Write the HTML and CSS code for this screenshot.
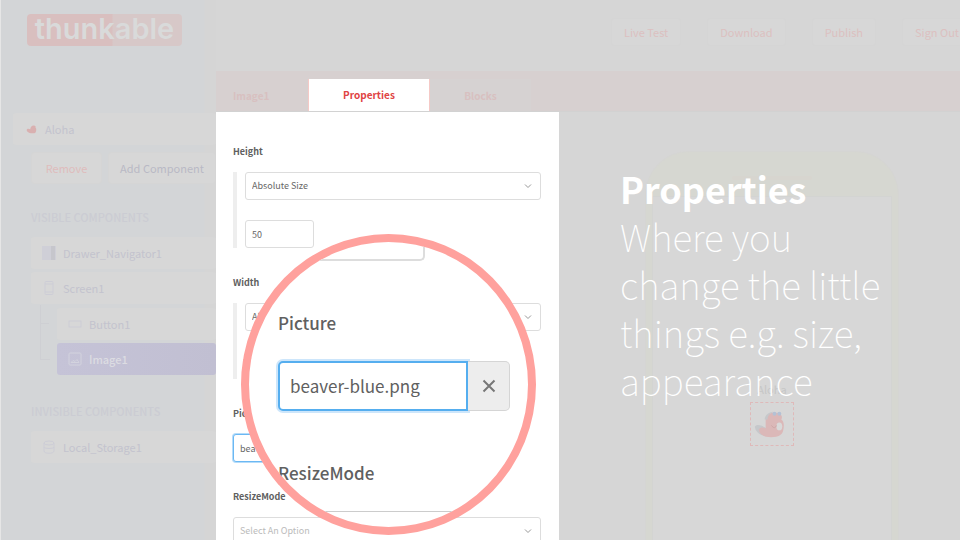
FILE: index.html
```
<!DOCTYPE html>
<html lang="en">
<head>
<meta charset="utf-8">
<title>Thunkable properties</title>
<link rel="stylesheet" href="styles.css">
</head>
<body>
<div class="stage">
  <div class="app">
    <aside class="sidebar">
      <a class="logo" href="#">thunkable</a>
      <a class="card project" href="#">
        <svg class="beaver-mini" viewBox="0 0 46 40"><path d="M4 20c4-3 8 0 12 1 1-9 7-16 15-15 5 0 8 4 6 8 4 4 4 14 0 20-6 6-26 4-33-4-3-4-3-8 0-10z"/></svg>
        <span>Aloha</span>
      </a>
      <div class="actions">
        <button class="remove" type="button">Remove</button>
        <button class="add" type="button">Add Component</button>
      </div>
      <h2>VISIBLE COMPONENTS</h2>
      <ul class="list">
        <li><a class="card" href="#">
          <svg class="icon" viewBox="0 0 14 14"><rect x="0" y="0" width="14" height="14" fill="#cfcfd7"/><rect x="9" y="0" width="4" height="14" fill="#c6c6cc"/></svg>
          <span>Drawer_Navigator1</span></a></li>
        <li><a class="card" href="#">
          <svg class="icon line" viewBox="0 0 14 14"><rect x="3" y="0.5" width="8" height="13" rx="1"/><path d="M3 3h8M3 11h8"/></svg>
          <span>Screen1</span></a>
          <ul class="list tree">
            <li><a class="card" href="#">
              <svg class="icon line" viewBox="0 0 14 14"><rect x="1" y="4" width="12" height="6"/></svg>
              <span>Button1</span></a></li>
            <li><a class="card selected" href="#">
              <svg class="icon line" viewBox="0 0 14 14"><rect x="1" y="1" width="12" height="12" rx="1"/><path d="M3 10.500l2-2 2 1 2-2 2 3z"/></svg>
              <span>Image1</span></a></li>
          </ul>
        </li>
      </ul>
      <h2>INVISIBLE COMPONENTS</h2>
      <ul class="list">
        <li><a class="card" href="#">
          <svg class="icon line" viewBox="0 0 14 14"><ellipse cx="7" cy="3" rx="5" ry="2"/><path d="M2 3v8c0 3 10 3 10 0V3M2 7c0 2 10 2 10 0"/></svg>
          <span>Local_Storage1</span></a></li>
      </ul>
    </aside>

    <div class="main">
      <header class="topbar">
        <button type="button">Live Test</button>
        <button type="button">Download</button>
        <button type="button">Publish</button>
        <button type="button">Sign Out</button>
      </header>
      <nav class="tabs">
        <span class="crumb">Image1</span>
        <a class="tab active" href="#">Properties</a>
        <a class="tab" href="#">Blocks</a>
      </nav>
      <div class="work">
        <form class="panel">
          <div class="field">
            <label for="height-mode">Height</label>
            <div class="group">
              <div class="select">
                <select id="height-mode"><option>Absolute Size</option></select>
                <svg viewBox="0 0 8 6"><path d="M1 1.500l3 3 3-3"/></svg>
              </div>
              <input class="box short" type="text" value="50" aria-label="Height value">
            </div>
          </div>
          <div class="field">
            <label for="width-mode">Width</label>
            <div class="group">
              <div class="select">
                <select id="width-mode"><option>Absolute Size</option></select>
                <svg viewBox="0 0 8 6"><path d="M1 1.500l3 3 3-3"/></svg>
              </div>
              <input class="box short" type="text" value="50" aria-label="Width value">
            </div>
          </div>
          <div class="field">
            <label for="picture">Picture</label>
            <input class="box focused" id="picture" type="text" value="beaver-blue.png">
          </div>
          <div class="field">
            <label for="resize">ResizeMode</label>
            <div class="select placeholder">
              <select id="resize"><option>Select An Option</option></select>
              <svg viewBox="0 0 8 6"><path d="M1 1.500l3 3 3-3"/></svg>
            </div>
          </div>

          <div class="lens">
            <div class="lens-edge"></div>
            <label for="lens-picture">Picture</label>
            <div class="lens-row">
              <input id="lens-picture" type="text" value="beaver-blue.png">
              <button type="button" aria-label="Clear">
                <svg viewBox="0 0 14 14"><path d="M1.500 1.500l11 11M12.500 1.500l-11 11"/></svg>
              </button>
            </div>
            <span class="lens-label">ResizeMode</span>
            <div class="lens-next"></div>
          </div>
        </form>

        <section class="preview">
          <div class="phone">
            <div class="speaker"></div>
            <div class="screen">
              <button class="aloha" type="button">Aloha</button>
              <div class="sprite">
                <svg viewBox="0 0 43 43">
                  <path d="M4 24c3-3 7-1 12 2l-1 8c-6-1-11-5-11-10z" fill="#c6c8cb"/>
                  <path d="M15 17c1-5 6-8 10-7 5 0 8 3 6 7 3 2 3 6 2 11-1 5-5 7-12 7-8 0-13-3-13-8 2-3 5-2 7-1z" fill="#dbb8b8"/>
                  <path d="M14 17c0-4 4-8 9-8-4 2-6 4-6 8z" fill="#c6c8cb"/>
                  <ellipse cx="29" cy="24" rx="3" ry="4" fill="#d9d9d9"/>
                  <circle cx="24" cy="11" r="2" fill="#b3c1d5"/><circle cx="29" cy="11" r="2" fill="#b3c1d5"/>
                  <path d="M21 23c2 3 4 3 5 0" stroke="#cba5a5" fill="none"/>
                </svg>
              </div>
            </div>
          </div>
        </section>
      </div>
    </div>
  </div>

  <div class="caption">
    <h1>Properties</h1>
    <p>Where you change the little things e.g. size, appearance</p>
  </div>
</div>
</body>
</html>
```
FILE: styles.css
```
* { box-sizing: border-box; }

body {
  margin: 0;
  background: #d6d6d6;
  font-family: "Noto Sans CJK SC", "Open Sans", sans-serif;
  font-size: 11px;
  line-height: 16px;
}

button, input, select { font: inherit; margin: 0; }
a { color: inherit; text-decoration: none; }
ul { list-style: none; margin: 0; padding: 0; }
svg { fill: none; }

.stage {
  position: relative;
  height: 100vh;
  overflow: hidden;
}

/* The editor runs a little past the right edge of the window. */
.app {
  display: grid;
  grid-template-columns: 215px 1fr;
  width: calc(100% + 25px);
  height: 100%;
  border-left: 1px solid #e6e6e6;
}

/* Sidebar */
.sidebar {
  padding: 14px 0 0 30px;
  background: linear-gradient(to right, #d3d5d7 203px, #d5d5d5 204px);
  color: #c3c3ce;
}

.logo {
  display: block;
  width: 155px;
  height: 32px;
  margin-left: -4px;
  border-radius: 4px;
  background: linear-gradient(to right, #d9bfbf 85px, #d7c8c8 86px);
  color: #d9dada;
  font: 600 29px/30px Inter, sans-serif;
  text-align: center;
}

.card {
  display: flex;
  align-items: center;
  gap: 7px;
  height: 32px;
  padding-left: 11px;
  border-radius: 3px;
  background: #d7d7d7;
}

.icon { width: 14px; height: 14px; flex: none; }
.icon.line { stroke: #cdcdd6; }

.project { margin: 67px 0 7px -18px; padding-left: 13px; }
.beaver-mini { width: 12px; height: 10px; }
.beaver-mini path { fill: #d9b0b0; }

.actions { display: flex; gap: 6px; }
.actions button {
  height: 32px;
  padding: 0;
  border: 1px solid #d5d5d5;
  border-radius: 3px;
  background: #d7d7d7;
}
.remove { width: 71px; color: #dfbcbc; }
.add { flex: 1; color: #b9b9c5; }

.sidebar h2 {
  margin: 25px 0 12px;
  color: #cbccd3;
  font-size: 11px;
  font-weight: 500;
  line-height: 16px;
}
.sidebar .list + h2 { margin-top: 28px; }

.list { display: grid; gap: 3px; }
.tree {
  position: relative;
  margin: 4px 0 0 26px;
}
.tree::before {
  content: "";
  position: absolute;
  left: -17px;
  top: -3px;
  width: 9px;
  height: 54px;
  border: solid #cecfd3;
  border-width: 0 0 1px 1px;
}
.tree::after {
  content: "";
  position: absolute;
  left: -17px;
  top: 15px;
  width: 9px;
  border-top: 1px solid #cecfd3;
}
.selected {
  background: linear-gradient(to right, #c5c3d7, #c1bfd2);
  color: #dcdce2;
  font-weight: 500;
}
.selected .icon.line { stroke: #d3d3de; }

/* Top bar and tabs */
.main {
  display: flex;
  flex-direction: column;
  min-width: 0;
}

.topbar {
  display: flex;
  justify-content: flex-end;
  gap: 26px;
  height: 71px;
  padding: 18px 13px 0 0;
}
.topbar button {
  height: 28px;
  padding: 0 12px;
  border: 1px solid #d5d5d5;
  border-radius: 3px;
  background: #d7d7d7;
  color: #dcc0c0;
}

.tabs {
  display: flex;
  height: 41px;
  padding-top: 8px;
  border-bottom: 1px solid #d2d2d2;
  background: #d7d0d0;
  color: #d8c0c0;
  font-size: 10px;
  font-weight: 700;
}
.crumb { width: 92px; padding: 9px 0 0 17px; }
.tab {
  width: 101px;
  background: #d6d2d2;
  line-height: 34px;
  text-align: center;
}
.tab.active {
  width: 122px;
  border: solid #f5c9c6;
  border-width: 0 1px;
  background: #fff;
  color: #df4444;
  line-height: 32px;
}

.work { display: flex; flex: 1; min-height: 0; }

/* Properties form */
.panel {
  position: relative;
  flex: 0 0 343px;
  display: flex;
  flex-direction: column;
  gap: 27px;
  padding: 32px 18px 0 17px;
  background: #fff;
  color: #666;
  font-size: 9px;
}
.field > label {
  display: block;
  margin-bottom: 12px;
  color: #606060;
  font-weight: 700;
}
.group {
  display: grid;
  gap: 20px;
  padding-left: 8px;
  border-left: 4px solid #eee;
}

.box, .select select {
  display: block;
  width: 100%;
  height: 28px;
  padding: 0 6px;
  border: 1px solid #ddd;
  border-radius: 3px;
  outline: 0;
  background: #fff;
  color: #666;
}
.box.short { width: 69px; }
.box.focused {
  width: 138px;
  border-color: #6bb8f3;
  box-shadow: 0 0 0 1px #b5dcfa;
}

.select { display: grid; align-items: center; }
.select select {
  grid-area: 1 / 1;
  appearance: none;
}
.select svg {
  grid-area: 1 / 1;
  justify-self: end;
  width: 8px;
  height: 6px;
  margin-right: 9px;
  stroke: #999;
}
.select.placeholder select { color: #bbb; }

/* Magnifier over the form */
.lens {
  position: absolute;
  left: 25px;
  top: 122px;
  width: 295px;
  height: 301px;
  padding-left: 29px;
  overflow: hidden;
  border: 8px solid #ffa19d;
  border-radius: 50%;
  background: #fff;
  color: #606060;
  font-size: 17px;
  line-height: 24px;
}
.lens label, .lens-label { display: block; font-weight: 500; }
.lens-edge {
  width: 147px;
  height: 19px;
  margin-bottom: 50px;
  border: solid #ddd;
  border-width: 0 2px 2px 0;
  border-bottom-right-radius: 5px;
}
.lens-row {
  display: flex;
  height: 50px;
  margin: 26px 0 50px;
}
.lens-row input {
  width: 190px;
  padding: 0 10px;
  border: 2px solid #55aeef;
  border-radius: 5px 0 0 5px;
  outline: 0;
  box-shadow: 0 0 0 2px #cde6fb;
  background: #fff;
  color: #606060;
}
.lens-row button {
  width: 42px;
  padding: 0;
  border: 1px solid #d5d5d5;
  border-left: 0;
  border-radius: 0 5px 5px 0;
  background: #ededed;
}
.lens-row svg {
  display: block;
  width: 14px;
  height: 14px;
  margin: 0 auto;
  stroke: #777;
  stroke-width: 2;
}
.lens-next {
  height: 40px;
  margin-top: 26px;
  margin-left: -29px;
  border-top: 1px solid #ccc;
}

/* Phone preview */
.preview {
  flex: 1;
  display: flex;
  justify-content: center;
  padding-top: 39px;
}
.phone {
  width: 254px;
  padding: 0 6px;
  border: 1px solid #d5d5d3;
  border-bottom: 0;
  border-radius: 44px 44px 0 0;
  background: #d6d7d1;
}
.speaker {
  width: 80px;
  height: 4px;
  margin: 24px auto 16px;
  border-radius: 2px;
  background: #d7d5cf;
}
.screen {
  display: flex;
  flex-direction: column;
  align-items: center;
  height: 100%;
  padding-top: 179px;
  border: 1px solid #d3d4d2;
  background: #d7d7d7;
}
.aloha {
  height: 26px;
  padding: 0 12px;
  border: 0;
  background: transparent;
  color: #c6c6c6;
}
.sprite {
  width: 44px;
  height: 44px;
  border: 1px dashed #dfb9b9;
}
.sprite svg { display: block; }

/* Caption laid over the preview */
.caption {
  position: absolute;
  left: 620px;
  top: 164px;
  width: 290px;
  color: #fff;
  font-size: 37px;
  line-height: 48px;
}
.caption h1, .caption p { margin: 0; font-size: inherit; }
.caption h1 { font-size: 36px; font-weight: 700; }
.caption p { font-weight: 100; }
```
